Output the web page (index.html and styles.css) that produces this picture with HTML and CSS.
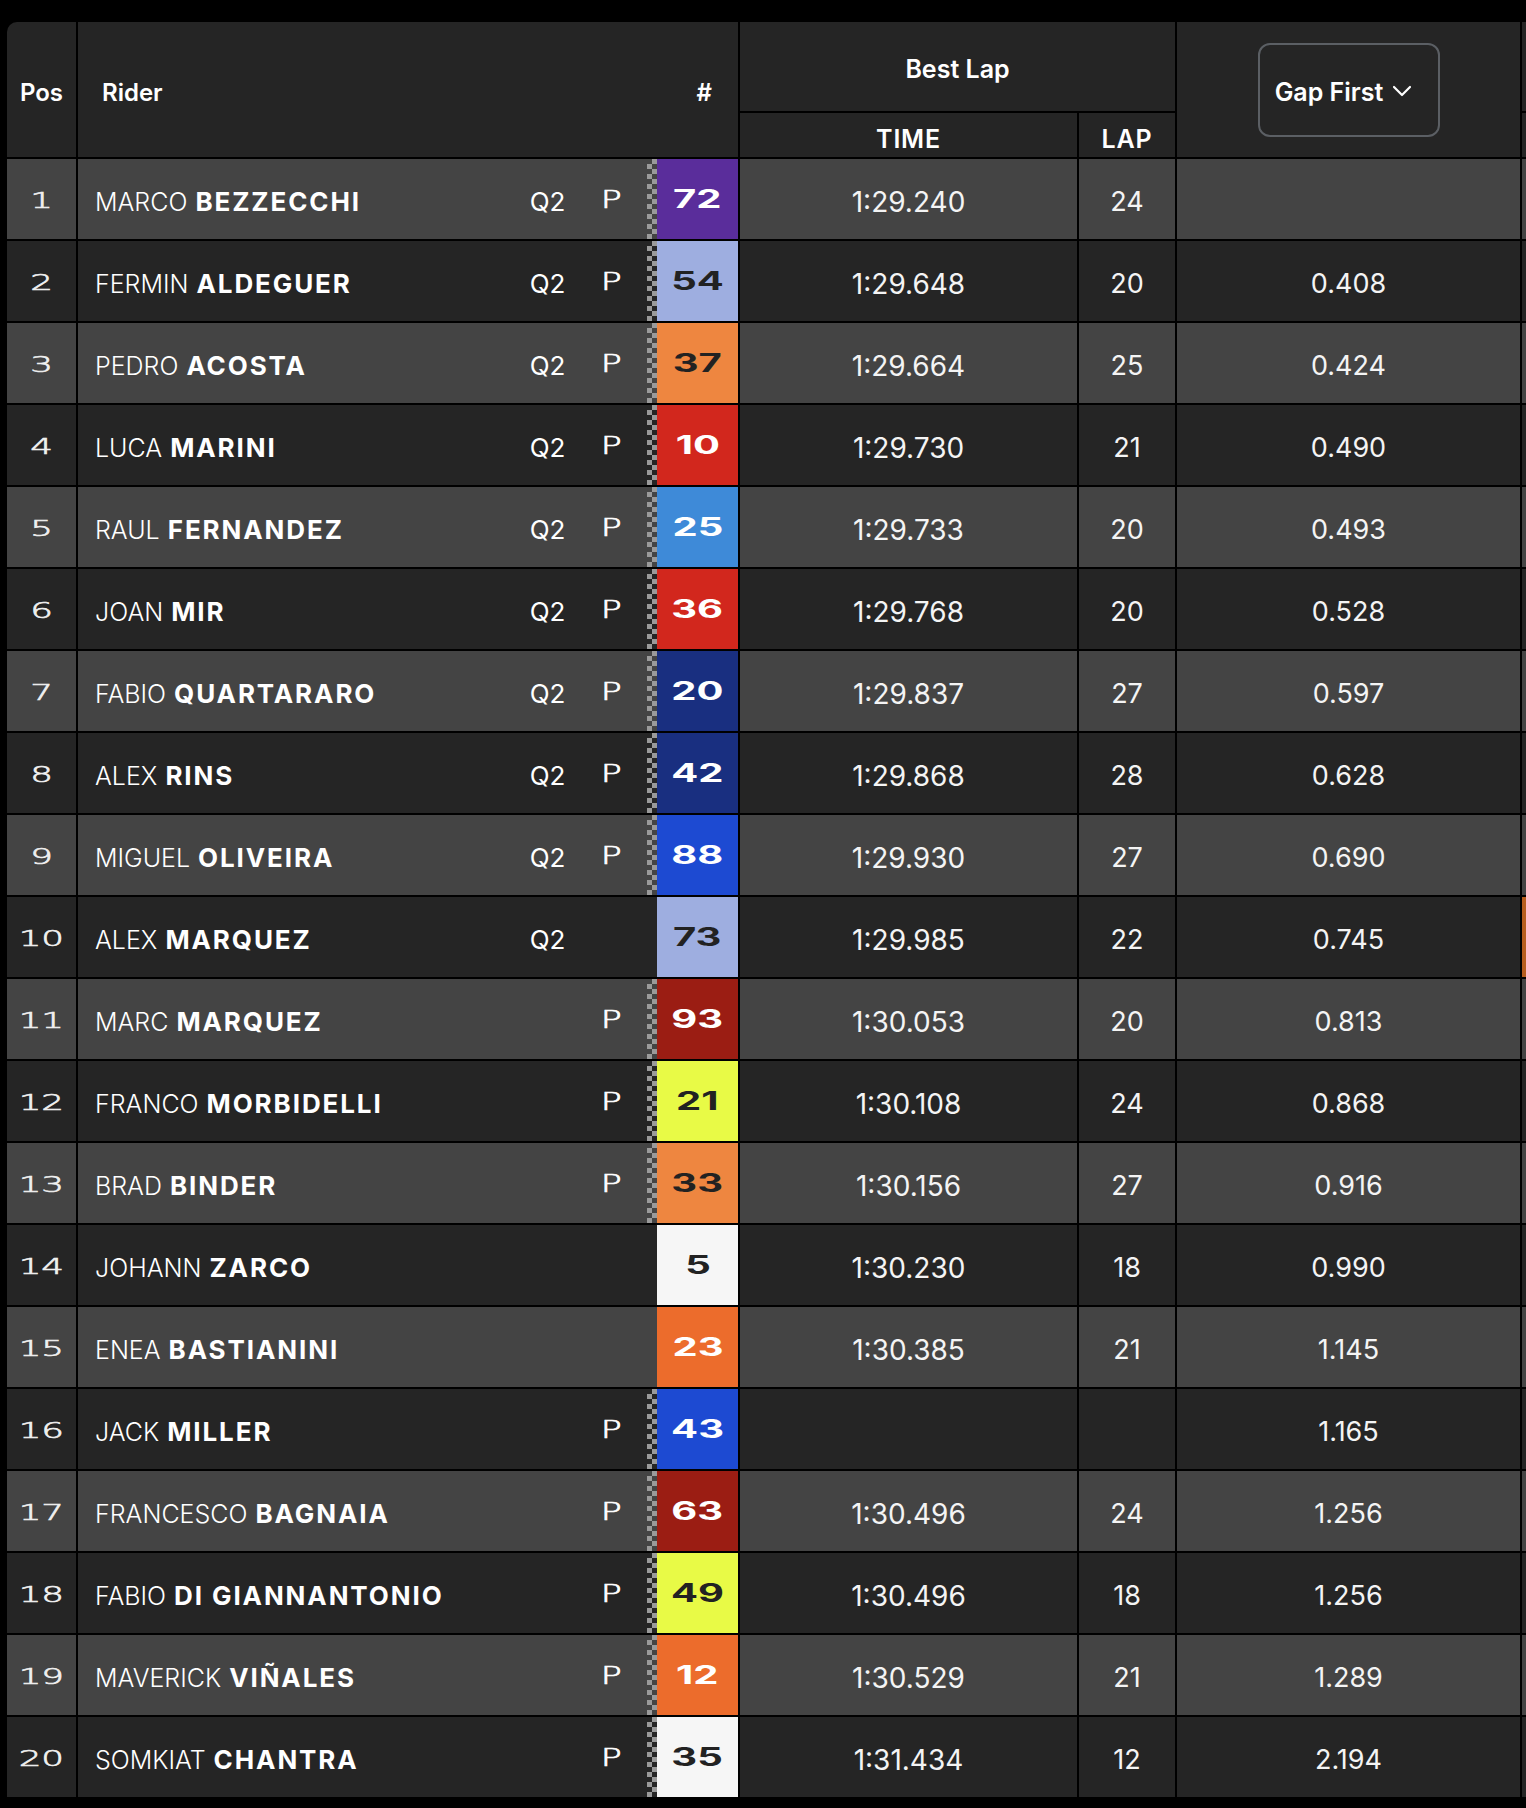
FILE: index.html
```html
<!DOCTYPE html>
<html lang="en">
<head>
<meta charset="utf-8">
<title>Best Lap Classification</title>
<link rel="stylesheet" href="styles.css">
</head>
<body>
<div class="wrap">
  <div class="board">
    <div class="h-pos">Pos</div>
    <div class="h-rider"><span>Rider</span><span class="hash">#</span></div>
    <div class="h-best">Best Lap</div>
    <div class="h-time">TIME</div>
    <div class="h-lap">LAP</div>
    <div class="h-gap">
      <button class="gap-btn" type="button">Gap First
        <svg class="chev" width="20" height="12" viewBox="0 0 20 12"><polyline points="2,2 10,10 18,2" fill="none" stroke="#fff" stroke-width="2.2" stroke-linecap="round" stroke-linejoin="round"/></svg>
      </button>
    </div>
    <div class="h-x1"></div>
    <div class="h-x2"></div>

    <div class="row alt"><div class="pos"><span>1</span></div><div class="rider"><div class="name"><span class="fn">MARCO</span><span class="ln">BEZZECCHI</span></div><div class="q">Q2</div><div class="p"><span>P</span></div><div class="chk"></div><div class="num c-purple"><span>72</span></div></div><div class="time">1:29.240</div><div class="lap">24</div><div class="gap"></div><div class="x"></div></div>

    <div class="row"><div class="pos"><span>2</span></div><div class="rider"><div class="name"><span class="fn">FERMIN</span><span class="ln">ALDEGUER</span></div><div class="q">Q2</div><div class="p"><span>P</span></div><div class="chk"></div><div class="num c-peri"><span>54</span></div></div><div class="time">1:29.648</div><div class="lap">20</div><div class="gap">0.408</div><div class="x"></div></div>

    <div class="row alt"><div class="pos"><span>3</span></div><div class="rider"><div class="name"><span class="fn">PEDRO</span><span class="ln">ACOSTA</span></div><div class="q">Q2</div><div class="p"><span>P</span></div><div class="chk"></div><div class="num c-orange"><span>37</span></div></div><div class="time">1:29.664</div><div class="lap">25</div><div class="gap">0.424</div><div class="x"></div></div>

    <div class="row"><div class="pos"><span>4</span></div><div class="rider"><div class="name"><span class="fn">LUCA</span><span class="ln">MARINI</span></div><div class="q">Q2</div><div class="p"><span>P</span></div><div class="chk"></div><div class="num c-red"><span>10</span></div></div><div class="time">1:29.730</div><div class="lap">21</div><div class="gap">0.490</div><div class="x"></div></div>

    <div class="row alt"><div class="pos"><span>5</span></div><div class="rider"><div class="name"><span class="fn">RAUL</span><span class="ln">FERNANDEZ</span></div><div class="q">Q2</div><div class="p"><span>P</span></div><div class="chk"></div><div class="num c-sky"><span>25</span></div></div><div class="time">1:29.733</div><div class="lap">20</div><div class="gap">0.493</div><div class="x"></div></div>

    <div class="row"><div class="pos"><span>6</span></div><div class="rider"><div class="name"><span class="fn">JOAN</span><span class="ln">MIR</span></div><div class="q">Q2</div><div class="p"><span>P</span></div><div class="chk"></div><div class="num c-red"><span>36</span></div></div><div class="time">1:29.768</div><div class="lap">20</div><div class="gap">0.528</div><div class="x"></div></div>

    <div class="row alt"><div class="pos"><span>7</span></div><div class="rider"><div class="name"><span class="fn">FABIO</span><span class="ln">QUARTARARO</span></div><div class="q">Q2</div><div class="p"><span>P</span></div><div class="chk"></div><div class="num c-navy"><span>20</span></div></div><div class="time">1:29.837</div><div class="lap">27</div><div class="gap">0.597</div><div class="x"></div></div>

    <div class="row"><div class="pos"><span>8</span></div><div class="rider"><div class="name"><span class="fn">ALEX</span><span class="ln">RINS</span></div><div class="q">Q2</div><div class="p"><span>P</span></div><div class="chk"></div><div class="num c-navy"><span>42</span></div></div><div class="time">1:29.868</div><div class="lap">28</div><div class="gap">0.628</div><div class="x"></div></div>

    <div class="row alt"><div class="pos"><span>9</span></div><div class="rider"><div class="name"><span class="fn">MIGUEL</span><span class="ln">OLIVEIRA</span></div><div class="q">Q2</div><div class="p"><span>P</span></div><div class="chk"></div><div class="num c-blue"><span>88</span></div></div><div class="time">1:29.930</div><div class="lap">27</div><div class="gap">0.690</div><div class="x"></div></div>

    <div class="row"><div class="pos"><span>10</span></div><div class="rider"><div class="name"><span class="fn">ALEX</span><span class="ln">MARQUEZ</span></div><div class="q">Q2</div><div class="p"></div><div class="chk none"></div><div class="num c-peri"><span>73</span></div></div><div class="time">1:29.985</div><div class="lap">22</div><div class="gap">0.745</div><div class="x x-orange"></div></div>

    <div class="row alt"><div class="pos"><span>11</span></div><div class="rider"><div class="name"><span class="fn">MARC</span><span class="ln">MARQUEZ</span></div><div class="q"></div><div class="p"><span>P</span></div><div class="chk"></div><div class="num c-maroon"><span>93</span></div></div><div class="time">1:30.053</div><div class="lap">20</div><div class="gap">0.813</div><div class="x"></div></div>

    <div class="row"><div class="pos"><span>12</span></div><div class="rider"><div class="name"><span class="fn">FRANCO</span><span class="ln">MORBIDELLI</span></div><div class="q"></div><div class="p"><span>P</span></div><div class="chk"></div><div class="num c-yellow"><span>21</span></div></div><div class="time">1:30.108</div><div class="lap">24</div><div class="gap">0.868</div><div class="x"></div></div>

    <div class="row alt"><div class="pos"><span>13</span></div><div class="rider"><div class="name"><span class="fn">BRAD</span><span class="ln">BINDER</span></div><div class="q"></div><div class="p"><span>P</span></div><div class="chk"></div><div class="num c-orange"><span>33</span></div></div><div class="time">1:30.156</div><div class="lap">27</div><div class="gap">0.916</div><div class="x"></div></div>

    <div class="row"><div class="pos"><span>14</span></div><div class="rider"><div class="name"><span class="fn">JOHANN</span><span class="ln">ZARCO</span></div><div class="q"></div><div class="p"></div><div class="chk none"></div><div class="num c-white"><span>5</span></div></div><div class="time">1:30.230</div><div class="lap">18</div><div class="gap">0.990</div><div class="x"></div></div>

    <div class="row alt"><div class="pos"><span>15</span></div><div class="rider"><div class="name"><span class="fn">ENEA</span><span class="ln">BASTIANINI</span></div><div class="q"></div><div class="p"></div><div class="chk none"></div><div class="num c-tang"><span>23</span></div></div><div class="time">1:30.385</div><div class="lap">21</div><div class="gap">1.145</div><div class="x"></div></div>

    <div class="row"><div class="pos"><span>16</span></div><div class="rider"><div class="name"><span class="fn">JACK</span><span class="ln">MILLER</span></div><div class="q"></div><div class="p"><span>P</span></div><div class="chk"></div><div class="num c-blue"><span>43</span></div></div><div class="time"></div><div class="lap"></div><div class="gap">1.165</div><div class="x"></div></div>

    <div class="row alt"><div class="pos"><span>17</span></div><div class="rider"><div class="name"><span class="fn">FRANCESCO</span><span class="ln">BAGNAIA</span></div><div class="q"></div><div class="p"><span>P</span></div><div class="chk"></div><div class="num c-maroon"><span>63</span></div></div><div class="time">1:30.496</div><div class="lap">24</div><div class="gap">1.256</div><div class="x"></div></div>

    <div class="row"><div class="pos"><span>18</span></div><div class="rider"><div class="name"><span class="fn">FABIO</span><span class="ln">DI GIANNANTONIO</span></div><div class="q"></div><div class="p"><span>P</span></div><div class="chk"></div><div class="num c-yellow"><span>49</span></div></div><div class="time">1:30.496</div><div class="lap">18</div><div class="gap">1.256</div><div class="x"></div></div>

    <div class="row alt"><div class="pos"><span>19</span></div><div class="rider"><div class="name"><span class="fn">MAVERICK</span><span class="ln">VIÑALES</span></div><div class="q"></div><div class="p"><span>P</span></div><div class="chk"></div><div class="num c-tang"><span>12</span></div></div><div class="time">1:30.529</div><div class="lap">21</div><div class="gap">1.289</div><div class="x"></div></div>

    <div class="row"><div class="pos"><span>20</span></div><div class="rider"><div class="name"><span class="fn">SOMKIAT</span><span class="ln">CHANTRA</span></div><div class="q"></div><div class="p"><span>P</span></div><div class="chk"></div><div class="num c-white"><span>35</span></div></div><div class="time">1:31.434</div><div class="lap">12</div><div class="gap">2.194</div><div class="x"></div></div>
  </div>
</div>
</body>
</html>
```

FILE: styles.css
```css
html, body {
  margin: 0;
  padding: 0;
  background: #000;
  overflow: hidden;
}

body {
  font-family: "Inter", "Liberation Sans", sans-serif;
  color: #fff;
}

.wrap {
  padding: 22px 0 0 7px;
}

.board {
  display: grid;
  grid-template-columns: 69px 660px 337px 96px 343px 120px;
  grid-template-rows: 89px 44px repeat(20, 80px);
  gap: 2px;
  background: #000;
  width: max-content;
  border-top-left-radius: 10px;
  overflow: hidden;
}

/* ---------- header ---------- */
.h-pos, .h-rider, .h-best, .h-time, .h-lap, .h-gap, .h-x1, .h-x2 {
  background: #252525;
  font-weight: 600;
  font-size: 24px;
  display: flex;
  align-items: center;
}

.h-pos {
  grid-column: 1;
  grid-row: 1 / 3;
  justify-content: center;
  padding-top: 6px;
}

.h-rider {
  grid-column: 2;
  grid-row: 1 / 3;
  justify-content: space-between;
  padding: 6px 26px 0 24px;
}

.h-best {
  grid-column: 3 / 5;
  grid-row: 1;
  justify-content: center;
  padding-top: 5px;
  font-size: 25px;
}

.h-time, .h-lap {
  grid-row: 2;
  justify-content: center;
  font-size: 25px;
  letter-spacing: 0.8px;
  padding-top: 7px;
}
.h-time { grid-column: 3; }
.h-lap { grid-column: 4; }

.h-gap {
  grid-column: 5;
  grid-row: 1 / 3;
  justify-content: center;
}

.h-x1 { grid-column: 6; grid-row: 1; }
.h-x2 { grid-column: 6; grid-row: 2; }

.gap-btn {
  width: 182px;
  height: 94px;
  border: 2px solid #5b5f64;
  border-radius: 12px;
  background: transparent;
  color: #fff;
  font-family: "Inter", "Liberation Sans", sans-serif;
  font-weight: 600;
  font-size: 25px;
  display: flex;
  align-items: center;
  justify-content: center;
  gap: 9px;
  padding: 4px 10px 0 0;
}

.chev { display: block; margin-top: -1px; }

/* ---------- rows ---------- */
.row { display: contents; }

.row > div { background: #252525; }
.row.alt > div { background: #444444; }

.pos {
  display: flex;
  align-items: center;
  justify-content: center;
}
.pos span {
  display: inline-block;
  font-family: "DejaVu Sans", sans-serif;
  font-weight: 300;
  font-size: 21px;
  color: #f0f0f0;
  -webkit-text-stroke: 0.6px #f0f0f0;
  transform: scaleX(1.7);
  margin-top: 3px;
}

.rider {
  display: flex;
  align-items: stretch;
}

.name {
  flex: 1;
  display: flex;
  align-items: center;
  padding: 5px 0 0 17px;
  white-space: nowrap;
  font-size: 25px;
}
.fn { font-weight: 300; }
.ln {
  font-weight: 700;
  font-size: 26px;
  letter-spacing: 1.9px;
  margin-left: 8px;
}

.q, .p {
  display: flex;
  align-items: center;
  justify-content: center;
  padding-top: 5px;
}
.q {
  width: 55px;
  font-size: 26px;
  font-weight: 400;
}
.p {
  width: 72px;
  padding-top: 2px;
}
.p span {
  display: inline-block;
  font-family: "DejaVu Sans", sans-serif;
  font-size: 24px;
  font-weight: 300;
  -webkit-text-stroke: 0.7px #fff;
  transform: scaleX(1.45);
}

.row > .rider > div { background: transparent; }

.row > .rider > .chk {
  width: 10px;
  background: repeating-conic-gradient(#9a9a9a 0 25%, transparent 0 50%) 0 0 / 10px 10px;
}
.row > .rider > .chk.none { background: transparent; }

.num {
  width: 81px;
  display: flex;
  align-items: center;
  justify-content: center;
}
.num span {
  display: inline-block;
  font-family: "Inter", sans-serif;
  font-weight: 700;
  font-size: 25px;
  transform: scaleX(1.6);
  margin-top: 0;
}

.row > .rider > .c-purple { background: #5a2d9b; color: #fff; }
.row > .rider > .c-peri   { background: #9eaee0; color: #222; }
.row > .rider > .c-orange { background: #ee8640; color: #222; }
.row > .rider > .c-red    { background: #d2271d; color: #fff; }
.row > .rider > .c-sky    { background: #3e8ad8; color: #fff; }
.row > .rider > .c-navy   { background: #192f80; color: #fff; }
.row > .rider > .c-blue   { background: #1d4ad2; color: #fff; }
.row > .rider > .c-maroon { background: #9b1d13; color: #fff; }
.row > .rider > .c-yellow { background: #e8fa46; color: #222; }
.row > .rider > .c-white  { background: #f6f6f6; color: #222; }
.row > .rider > .c-tang   { background: #ec6c2c; color: #fff; }

.time, .lap, .gap {
  display: flex;
  align-items: center;
  justify-content: center;
  font-size: 27px;
  font-weight: 400;
  color: #f4f4f4;
  padding-top: 5px;
}
.time { font-size: 28px; }

.row > .x-orange { background: #b65d1e; }
```
